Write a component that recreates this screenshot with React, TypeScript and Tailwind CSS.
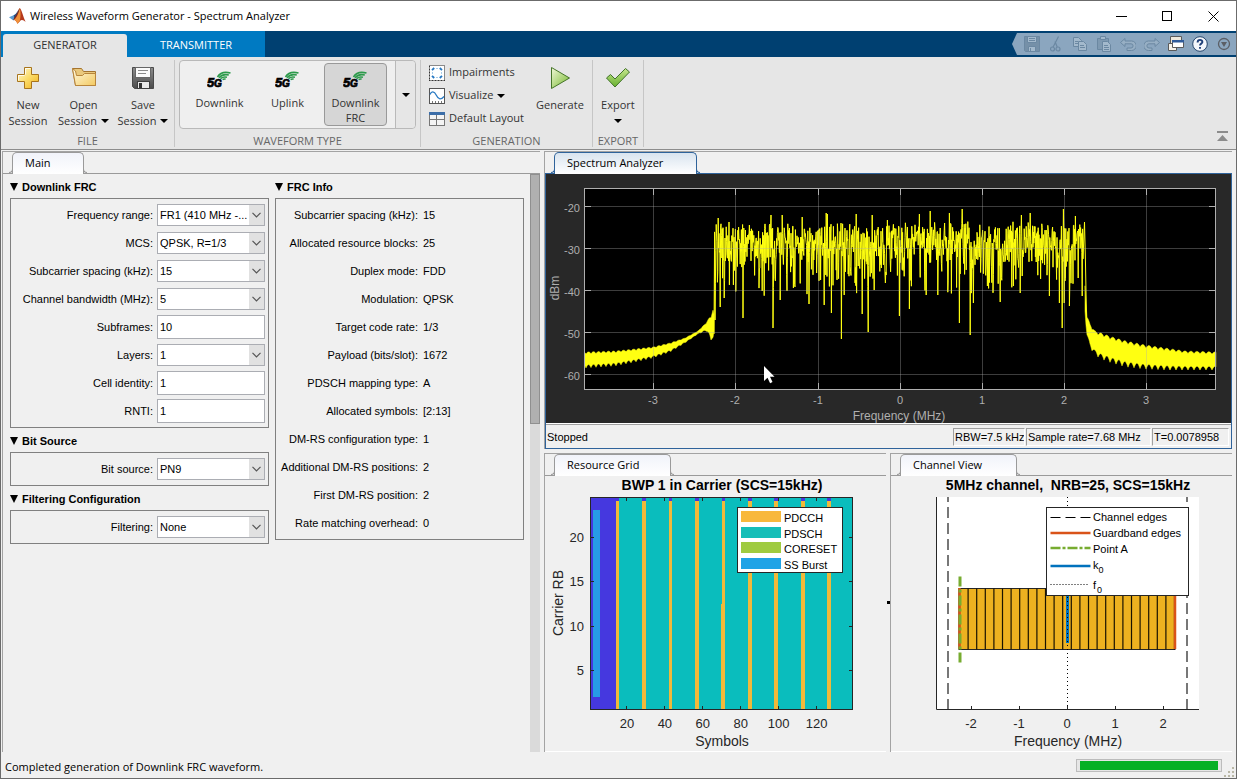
import React from "react";

const UI = "font-['Open_Sans','Noto_Sans',sans-serif]";
const ARIAL = "Liberation Sans, Arial, sans-serif";

/* ---------- icons ---------- */

function MatlabLogo() {
  return (
    <svg width="17" height="16" viewBox="0 0 17 16" aria-hidden="true">
      <path d="M0 9.3 4.6 7.2 7.4 9.2 4.4 12.4 Z" fill="#5b9bd0" />
      <path d="M4.6 7.2C6.6 6.6 7.6 4.6 9 2.4L7.4 9.4 6 11Z" fill="#1d4f86" />
      <path d="M10.8 0C9.2 1.6 8.3 5.4 6.2 8.2 5.6 9.2 4.6 10.8 4.4 12.2 6.2 11.6 7.6 13.6 8.4 15.8 10 14.8 11 12.4 12.6 12 14 11.7 15.2 12.8 16.6 13.8 14.4 9.6 13 2.4 10.8 0Z" fill="#b5391c" />
      <path d="M10.8 0C11.6 3 12 8 10.8 12.8 10 14 9.4 15.2 8.4 15.8 7.4 13.4 6.2 11.6 4.4 12.2 8 10.4 9.6 4.6 10.8 0Z" fill="#f0913a" />
      <path d="M10.8 0C9.4 1.4 8.6 5 6.4 8 5.6 9 4.8 10.6 4.4 12.2 6.8 10 9.2 6 10.8 0Z" fill="#4a2530" opacity="0.75" />
    </svg>
  );
}

function PlusIcon() {
  return (
    <svg width="24" height="24" viewBox="0 0 24 24" aria-hidden="true">
      <defs>
        <linearGradient id="plusFill" x1="0" y1="0" x2="1" y2="1">
          <stop offset="0" stopColor="#fffbe0" />
          <stop offset="0.5" stopColor="#fbdc6a" />
          <stop offset="1" stopColor="#efb01c" />
        </linearGradient>
      </defs>
      <path d="M8.5 1.5h7v7h7v7h-7v7h-7v-7h-7v-7h7z" fill="url(#plusFill)" stroke="#a8741c" />
      <path d="M9.5 8.5v-6h5M2.5 14.5v-5h6" fill="none" stroke="#fff" opacity="0.8" />
    </svg>
  );
}

function FolderIcon() {
  return (
    <svg width="26" height="22" viewBox="0 0 26 22" aria-hidden="true">
      <defs>
        <linearGradient id="folderFill" x1="0" y1="0" x2="1" y2="1">
          <stop offset="0" stopColor="#fffbe6" />
          <stop offset="1" stopColor="#f3c95f" />
        </linearGradient>
      </defs>
      <path d="M1.5 2.5H10.5L12.5 5.5H24.5V19.5H4.5Z" fill="#e9c87c" stroke="#a5742f" />
      <path d="M1.5 2.5 4.5 19.5H24.5V7.5H13.5L11.5 9.5H5.5L4.500 5Z" fill="url(#folderFill)" stroke="#b8853b" />
    </svg>
  );
}

function SaveIcon() {
  return (
    <svg width="24" height="24" viewBox="0 0 24 24" aria-hidden="true">
      <defs>
        <linearGradient id="saveFill" x1="0" y1="0" x2="0" y2="1">
          <stop offset="0" stopColor="#8d8d8d" />
          <stop offset="1" stopColor="#4b4b4b" />
        </linearGradient>
      </defs>
      <path d="M1.5 1.5h21v21h-19l-2-2z" fill="url(#saveFill)" stroke="#4a4a4a" />
      <rect x="4.5" y="1.5" width="15" height="10" fill="#fafafa" stroke="#666" />
      <path d="M7 4.5h10M7 7.5h8" stroke="#8a8a8a" />
      <rect x="6.5" y="15.5" width="12" height="7" fill="#e8e8e8" stroke="#3d3d3d" />
      <rect x="8" y="17" width="3" height="5" fill="#333" />
    </svg>
  );
}

function FiveGIcon() {
  return (
    <svg width="26" height="20" viewBox="0 0 26 20" aria-hidden="true">
      <text x="0" y="17" fontFamily={ARIAL} fontSize="13" fontWeight="bold" fontStyle="italic" fill="#000" stroke="#000" strokeWidth="0.7">5</text>
      <text x="7" y="17" fontFamily={ARIAL} fontSize="10" fontWeight="bold" fontStyle="italic" fill="#000" stroke="#000" strokeWidth="0.7">G</text>
      <g fill="none" stroke="#2c9a4b" strokeWidth="1.6">
        <path d="M10.5 7C13 2.8 18 1.6 23.5 3" />
        <path d="M12 7.8C14.5 4.8 17.6 4 21.8 5" />
        <path d="M13.5 8.6C15.6 6.8 17.4 6.6 20 7.2" />
        <path d="M15.6 9.6C16.6 8.9 17.6 8.8 18.6 9.3" />
      </g>
    </svg>
  );
}

function ImpairmentsIcon() {
  return (
    <svg width="16" height="16" viewBox="0 0 16 16" aria-hidden="true">
      <rect x="0.5" y="0.5" width="15" height="15" fill="#fff" stroke="#8a8a8a" />
      <path d="M0.5 1v15M0 15.5h16" stroke="#333" strokeDasharray="1 2" />
      <g stroke="#2678c2" strokeWidth="1.8">
        <path d="M3 5.2 5.2 3M10.8 3 13 5.2M3 10.8 5.2 13M10.8 13 13 10.8" />
      </g>
      <path d="M7 3.5h2M7 12.5h2M3.5 7v2M12.5 7v2" stroke="#a9cdea" />
    </svg>
  );
}

function VisualizeIcon() {
  return (
    <svg width="16" height="16" viewBox="0 0 16 16" aria-hidden="true">
      <rect x="0.5" y="0.5" width="15" height="15" fill="#fff" stroke="#555" />
      <path d="M3.5 15v-2M6.5 15v-2M9.5 15v-2M12.5 15v-2" stroke="#777" />
      <path d="M1 6.5C2.5 3 5 2.8 7.5 7.5 9.5 11.8 12 12 15 8.5" fill="none" stroke="#2678c2" strokeWidth="1.3" />
    </svg>
  );
}

function LayoutIcon() {
  return (
    <svg width="16" height="16" viewBox="0 0 16 16" aria-hidden="true">
      <rect x="0.5" y="1.5" width="15" height="13" fill="#f4f4f4" stroke="#777" />
      <rect x="0" y="1" width="16" height="3" fill="#3c6ea8" />
      <path d="M7.5 4v10M1 8.5h14" stroke="#777" />
    </svg>
  );
}

function PlayIcon() {
  return (
    <svg width="22" height="24" viewBox="0 0 22 24" aria-hidden="true">
      <defs>
        <linearGradient id="playFill" x1="0" y1="0" x2="1" y2="1">
          <stop offset="0" stopColor="#f1f8d8" />
          <stop offset="1" stopColor="#74b72b" />
        </linearGradient>
      </defs>
      <path d="M2.5 1.5 20.5 12 2.5 22.5Z" fill="url(#playFill)" stroke="#46752a" strokeLinejoin="round" />
    </svg>
  );
}

function CheckIcon() {
  return (
    <svg width="26" height="22" viewBox="0 0 26 22" aria-hidden="true">
      <defs>
        <linearGradient id="checkFill" x1="0" y1="0" x2="0" y2="1">
          <stop offset="0" stopColor="#c6e68d" />
          <stop offset="1" stopColor="#67b02f" />
        </linearGradient>
      </defs>
      <path d="M1.5 12 5.5 8.5 10 13 20.5 2.5 24.5 6 10 21Z" fill="url(#checkFill)" stroke="#41722a" strokeLinejoin="round" />
    </svg>
  );
}

function Caret() {
  return (
    <svg width="8" height="4" viewBox="0 0 8 4" aria-hidden="true" className="inline-block shrink-0">
      <path d="M0 0h8L4 4z" fill="#000" />
    </svg>
  );
}

/* ---------- title bar and ribbon ---------- */

function TitleBar() {
  return (
    <header className="flex h-[30px] shrink-0 items-center bg-white pl-2">
      <MatlabLogo />
      <h1 className="flex-1 pl-1 text-[11px] text-black">Wireless Waveform Generator - Spectrum Analyzer</h1>
      <button aria-label="Minimize" className="flex w-[46px] justify-center">
        <svg width="11" height="11"><path d="M0 5.5h11" stroke="#000" /></svg>
      </button>
      <button aria-label="Maximize" className="flex w-[46px] justify-center">
        <svg width="11" height="11"><rect x="0.5" y="0.5" width="9" height="9" fill="none" stroke="#000" /></svg>
      </button>
      <button aria-label="Close" className="flex w-[46px] justify-center">
        <svg width="11" height="11"><path d="M0.5 0.5l10 10M10.5 0.5l-10 10" stroke="#000" /></svg>
      </button>
    </header>
  );
}

const quick: { name: string; art: React.ReactNode }[] = [
  {
    name: "Save",
    art: (
      <g fill="none" stroke="#6b88a2">
        <path d="M0.5 0.5h15v15h-14l-1-1z" fill="#7590a8" />
        <path d="M3.5 0.5h9v6h-9z" fill="#a3b9cc" />
        <path d="M4.5 10.5h7v5h-7z" fill="#a3b9cc" />
        <path d="M5 2.5h6M5 4.5h6M6.5 12v3" />
      </g>
    ),
  },
  {
    name: "Cut",
    art: (
      <g fill="none" stroke="#6b88a2" strokeWidth="1.2">
        <circle cx="4.5" cy="13" r="2" />
        <circle cx="10" cy="13" r="2" />
        <path d="M5 11.2 10.5 0.5M9.2 11 7 5.5" />
      </g>
    ),
  },
  {
    name: "Copy",
    art: (
      <g fill="#a3b9cc" stroke="#6b88a2">
        <path d="M1.5 1.5h5l3 3v6h-8z" />
        <path d="M6.5 5.5h5l3 3v6h-8z" />
        <path d="M3 5.5h3M3 7.5h3M8 9.5h4M8 11.5h5" />
      </g>
    ),
  },
  {
    name: "Paste",
    art: (
      <g fill="#7e99b1" stroke="#6b88a2">
        <path d="M1.5 2.5h11v11h-11z" />
        <path d="M4.5 0.5h5v3h-5z" fill="#a3b9cc" />
        <path d="M6.5 5.5h5l3 3v7h-8z" fill="#a3b9cc" />
        <path d="M8 9.5h4M8 11.5h5M8 13.5h5" />
      </g>
    ),
  },
  { name: "Undo", art: <path d="M0.5 6.5 5 2.5V5h6.5a4 4 0 0 1 0 9.5H7v-2.5h4a1.8 1.8 0 0 0 0-4.2H5v2.7z" fill="#97afc4" stroke="#6b88a2" /> },
  { name: "Redo", art: <path d="M15.5 6.5 11 2.5V5H4.5a4 4 0 0 0 0 9.5H8v-2.5H5a1.8 1.8 0 0 1 0-4.2h6v2.7z" fill="#97afc4" stroke="#6b88a2" /> },
  {
    name: "Windows",
    art: (
      <g stroke="#5a5a5a">
        <path d="M2.5 0.5h11v9h-11z" fill="#efe9dc" />
        <path d="M0.5 7.5h8v7h-8z" fill="#f7f3ea" />
        <path d="M4.5 4.5h11v7h-11z" fill="#fff" />
        <path d="M4 4h12v2.5H4z" fill="#2f5b9a" stroke="none" />
      </g>
    ),
  },
  {
    name: "Help",
    art: (
      <g>
        <circle cx="8" cy="8" r="7.3" fill="#f4f7fb" stroke="#27476d" />
        <path d="M5.6 6.4C5.6 3 10.6 3.2 10.4 6.2 10.2 7.8 8 7.6 8 9.6M8 11v1.8" fill="none" stroke="#1f3f78" strokeWidth="1.9" />
      </g>
    ),
  },
  {
    name: "More",
    art: (
      <g>
        <circle cx="8" cy="8" r="5.5" fill="none" stroke="#5b5f66" strokeWidth="1.3" />
        <path d="M5 6h6L8 11z" fill="#5b5f66" />
      </g>
    ),
  },
];

function TabBand() {
  return (
    <div className="flex h-[26px] shrink-0 items-stretch bg-[#004071]">
      <nav className="flex bg-[#007ac2] pl-0.5 text-[11px]">
        <button className="mt-[3px] w-[124px] rounded-t-[3px] bg-[#e6e6e6] text-[#333]">GENERATOR</button>
        <button className="w-[138px] pt-[3px] text-white">TRANSMITTER</button>
      </nav>
      <div className="flex-1" />
      <div className="my-0.5 flex items-center gap-2 bg-[#8ba6bf] pr-1 pl-3 [clip-path:polygon(5px_0,100%_0,100%_100%,5px_100%,0_50%)]">
        {quick.map((q) => (
          <button key={q.name} aria-label={q.name}>
            <svg width="16" height="16" viewBox="0 0 16 16" className="block">{q.art}</svg>
          </button>
        ))}
      </div>
    </div>
  );
}

function Section({ title, children }: { title: string; children: React.ReactNode }) {
  return (
    <section className="mt-[3px] mb-0.5 flex flex-col border-r border-[#c6c6c6]">
      <div className="flex flex-1 items-start">{children}</div>
      <h2 className="text-center text-[11px] leading-[13px] text-[#666]">{title}</h2>
    </section>
  );
}

function BigButton({ icon, children, width }: { icon: React.ReactNode; children: React.ReactNode; width: string }) {
  return (
    <button className={`flex flex-col items-center pt-1.5 text-[11px] leading-4 text-[#333] ${width}`}>
      <span className="flex h-[31px] items-start justify-center">{icon}</span>
      {children}
    </button>
  );
}

function GalleryItem({ selected, children }: { selected?: boolean; children: React.ReactNode }) {
  const skin = selected ? "border-[#999] bg-[#d6d6d6]" : "border-transparent";
  return (
    <button className={`flex h-[63px] w-[63px] flex-col items-center rounded border pt-1.5 text-[11px] leading-[15px] text-[#333] ${skin}`}>
      <FiveGIcon />
      <span className="pt-[5px]">{children}</span>
    </button>
  );
}

function Ribbon() {
  return (
    <div className="flex h-[93px] shrink-0 border-b border-[#8c8c8c] bg-[#e6e6e6]">
      <Section title="FILE">
        <BigButton icon={<PlusIcon />} width="w-[54px]"><span>New</span><span>Session</span></BigButton>
        <BigButton icon={<FolderIcon />} width="w-[57px]"><span>Open</span><span className="flex items-center gap-1 whitespace-nowrap">Session <Caret /></span></BigButton>
        <BigButton icon={<SaveIcon />} width="w-[62px]"><span>Save</span><span className="flex items-center gap-1 whitespace-nowrap">Session <Caret /></span></BigButton>
      </Section>
      <Section title="WAVEFORM TYPE">
        <div className="mx-1 flex h-[69px] rounded border border-[#b9b9b9] bg-[#efefef]">
          <div className="flex gap-[5px] px-2 pt-0.5">
            <GalleryItem>Downlink</GalleryItem>
            <GalleryItem>Uplink</GalleryItem>
            <GalleryItem selected>Downlink<br />FRC</GalleryItem>
          </div>
          <button aria-label="More waveform types" className="flex w-5 items-center justify-center rounded-r border-l border-[#b9b9b9] bg-[#e6e6e6]"><Caret /></button>
        </div>
      </Section>
      <Section title="GENERATION">
        <div className="flex flex-col pt-px pl-2 text-[11px] text-[#333]">
          <button className="flex h-[23px] items-center gap-1"><ImpairmentsIcon />Impairments</button>
          <button className="flex h-[23px] items-center gap-1"><VisualizeIcon />Visualize <Caret /></button>
          <button className="flex h-[23px] items-center gap-1 whitespace-nowrap"><LayoutIcon />Default Layout</button>
        </div>
        <div className="pl-1">
          <BigButton icon={<PlayIcon />} width="w-[64px]"><span>Generate</span></BigButton>
        </div>
      </Section>
      <Section title="EXPORT">
        <BigButton icon={<CheckIcon />} width="w-[50px]"><span>Export</span><span className="flex h-4 items-center"><Caret /></span></BigButton>
      </Section>
      <button aria-label="Collapse toolstrip" className="mr-2 mb-[7px] ml-auto self-end">
        <svg width="11" height="11" viewBox="0 0 11 11" className="block"><path d="M0 0h11v2H0zM5.5 4 11 10H0z" fill="#8c8c8c" /></svg>
      </button>
    </div>
  );
}

/* ---------- docked panels ---------- */

function Panel({ title, tabWidth, active, children }: { title: string; tabWidth: string; active?: boolean; children: React.ReactNode }) {
  const line = active ? "border-[#2f639b]" : "border-[#9a9a9a]";
  const fill = active ? "from-[#d9e4ef]" : "from-[#f1f3fa]";
  return (
    <section className="flex min-h-0 min-w-0 flex-col border-t border-l border-[#a3a3a3]">
      <div className={`flex h-[22px] shrink-0 border-b pl-1.5 ${line}`}>
        <span className={`-mr-px h-1 w-1 self-end rounded-br border-r border-b ${line}`} />
        <h2 className={`z-10 -mb-px flex items-center rounded-t-[5px] border-x border-t bg-linear-to-b to-white px-3 text-[11px] text-black ${fill} ${line} ${tabWidth}`}>{title}</h2>
        <span className={`z-10 -ml-px h-1 w-1 self-end rounded-bl border-b border-l ${line}`} />
      </div>
      {children}
    </section>
  );
}

function Group({ title, children }: { title: string; children: React.ReactNode }) {
  return (
    <section>
      <h3 className="flex h-6 items-center gap-1 pt-0.5 text-[11px] font-bold text-black">
        <svg width="8" height="8" viewBox="0 0 8 8" aria-hidden="true"><path d="M0 0h8L4 8z" /></svg>
        {title}
      </h3>
      <div className="border border-[#808080] py-0.5">{children}</div>
    </section>
  );
}

function Row({ id, label, value, kind }: { id: string; label: string; value: string; kind: "select" | "text" }) {
  return (
    <div className="flex h-7 items-center pr-[3px]">
      <label htmlFor={id} className="flex-1 pr-1 text-right">{label}</label>
      {kind === "select" ? (
        <div className="relative w-[108px]">
          <select id={id} defaultValue={value} className="block h-[22px] w-full appearance-none rounded-none border border-[#abadb3] bg-white pr-4 pl-0.5 text-[11px] text-black">
            <option>{value}</option>
          </select>
          <span className="pointer-events-none absolute inset-y-px right-px flex w-[15px] items-center justify-center bg-[#e1e1e1]">
            <svg width="9" height="6" viewBox="0 0 9 6"><path d="M0.5 0.8 4.5 4.8 8.5 0.8" fill="none" stroke="#555" strokeWidth="1.2" /></svg>
          </span>
        </div>
      ) : (
        <input id={id} defaultValue={value} className="h-6 w-[108px] border border-[#abadb3] bg-white pl-0.5 text-[11px] text-black" />
      )}
    </div>
  );
}

const info: [string, string][] = [
  ["Subcarrier spacing (kHz):", "15"],
  ["Allocated resource blocks:", "25"],
  ["Duplex mode:", "FDD"],
  ["Modulation:", "QPSK"],
  ["Target code rate:", "1/3"],
  ["Payload (bits/slot):", "1672"],
  ["PDSCH mapping type:", "A"],
  ["Allocated symbols:", "[2:13]"],
  ["DM-RS configuration type:", "1"],
  ["Additional DM-RS positions:", "2"],
  ["First DM-RS position:", "2"],
  ["Rate matching overhead:", "0"],
];

function MainPanel() {
  return (
    <Panel title="Main" tabWidth="w-[72px]">
      <div className="flex min-h-0 flex-1 justify-between overflow-hidden pl-[7px] font-['Liberation_Sans',Arial,sans-serif] text-[11px] text-black">
        <div className="w-[259px]">
          <Group title="Downlink FRC">
            <Row id="range" kind="select" label="Frequency range:" value="FR1 (410 MHz -..." />
            <Row id="mcs" kind="select" label="MCS:" value="QPSK, R=1/3" />
            <Row id="scs" kind="select" label="Subcarrier spacing (kHz):" value="15" />
            <Row id="bw" kind="select" label="Channel bandwidth (MHz):" value="5" />
            <Row id="subframes" kind="text" label="Subframes:" value="10" />
            <Row id="layers" kind="select" label="Layers:" value="1" />
            <Row id="cell" kind="text" label="Cell identity:" value="1" />
            <Row id="rnti" kind="text" label="RNTI:" value="1" />
          </Group>
          <Group title="Bit Source">
            <Row id="bits" kind="select" label="Bit source:" value="PN9" />
          </Group>
          <Group title="Filtering Configuration">
            <Row id="filter" kind="select" label="Filtering:" value="None" />
          </Group>
        </div>
        <div className="w-[249px]">
          <Group title="FRC Info">
            <dl>
              {info.map(([k, v]) => (
                <div key={k} className="flex h-7 items-center gap-[5px]">
                  <dt className="w-[142px] text-right whitespace-nowrap">{k}</dt>
                  <dd>{v}</dd>
                </div>
              ))}
            </dl>
          </Group>
        </div>
        <div className="w-[10px] bg-[#dadada]">
          <div className="h-[250px] border border-[#8f8f8f] bg-[#b0b0b0]" />
        </div>
      </div>
    </Panel>
  );
}

/* ---------- spectrum ---------- */

const fx = (mhz: number) => Math.floor(354.2 + 82.2 * mhz);
const dy = (dbm: number) => Math.floor(32.5 - (dbm + 20) * 4.2);

const extremes: [number, number][] = [
  [169, 146], [172, 44], [174, 133], [178, 124], [183, 48], [197, 144], [216, 117], [225, 41], [227, 154], [234, 126], [236, 41], [256, 43], [263, 130],
  [278, 131], [280, 39], [281, 40], [285, 139], [295, 165], [298, 121], [310, 40], [316, 140], [322, 158], [326, 41], [328, 116], [341, 46], [353, 142],
  [363, 135], [373, 40], [380, 121], [384, 37], [403, 39], [413, 149], [416, 35], [424, 161], [427, 129], [441, 112], [454, 128], [467, 112], [474, 119],
  [475, 41], [484, 39], [503, 122], [513, 129], [516, 154], [517, 35], [518, 129], [523, 132], [529, 42],
];

// Faded carrier bins: exponentially distributed power, in dB, around the in-band mean.
function inBandTrace() {
  let seed = 90211;
  const rnd = () => {
    seed = (seed * 1664525 + 1013904223) % 4294967296;
    return (seed + 1) / 4294967297;
  };
  const pts: string[] = ["168,160"];
  let next = 0;
  for (let x = 168.6; x <= 537; x += 0.4) {
    if (next < extremes.length && extremes[next][0] <= x) {
      pts.push(`${x.toFixed(1)},${extremes[next][1]}`);
      next++;
      continue;
    }
    const db = 10 * Math.log10(-Math.log(rnd()));
    const y = Math.min(108 + rnd() * 14, Math.max(47 + rnd() * 8, 65 - db * 3.4));
    pts.push(`${x.toFixed(1)},${y.toFixed(1)}`);
  }
  pts.push("538.5,48", "539.5,90", "540.5,145");
  return pts.join(" ");
}

type Env = [number, number, number];

function skirt(env: Env[], period: number) {
  const at = (x: number): [number, number] => {
    let i = 0;
    while (i < env.length - 2 && env[i + 1][0] < x) i++;
    const [x0, t0, b0] = env[i];
    const [x1, t1, b1] = env[i + 1];
    const k = (x - x0) / (x1 - x0);
    return [t0 + (t1 - t0) * k, b0 + (b1 - b0) * k];
  };
  const top: string[] = [];
  const bottom: string[] = [];
  for (let x = env[0][0]; x <= env[env.length - 1][0]; x += 0.5) {
    const [t, b] = at(x);
    const wob = Math.abs(Math.sin((Math.PI * x) / period));
    const depth = (b - t) * 0.2;
    top.push(`${x},${(t + depth * 0.6 * (1 - wob)).toFixed(1)}`);
    bottom.unshift(`${x},${(b - depth * wob).toFixed(1)}`);
  }
  return [...top, ...bottom].join(" ");
}

const leftSkirt: Env[] = [[39, 178, 194], [69, 177, 192], [89, 175, 188], [107, 173, 184], [124, 169, 178], [139, 164, 169], [152, 157, 160], [160, 149, 157], [165, 141, 166], [167, 136, 170], [168, 140, 162]];
const rightSkirt: Env[] = [[539, 110, 140], [541, 142, 163], [544, 150, 174], [549, 157, 181], [555, 159, 185], [566, 163, 189], [580, 167, 193], [599, 171, 195], [619, 174, 196], [639, 177, 196], [670, 178, 196]];

function SpectrumPlot() {
  return (
    <svg viewBox="0 0 685 249" className="block min-h-0 w-full flex-1 bg-[#282828]" role="img" aria-label="Spectrum">
      <rect x="38.5" y="14.5" width="631" height="201" fill="#000" />
      <polyline points={inBandTrace()} fill="none" stroke="#ffff11" strokeWidth="1" strokeLinejoin="bevel" />
      <polygon points={skirt(leftSkirt, 5)} fill="#ffff11" stroke="#ffff11" strokeWidth="0.5" />
      <polygon points={skirt(rightSkirt, 6)} fill="#ffff11" stroke="#ffff11" strokeWidth="0.5" />
      <g fontFamily={ARIAL} fontSize="11" fill="#afafaf">
        {[-3, -2, -1, 0, 1, 2, 3].map((f) => (
          <g key={f}>
            <path d={`M${fx(f) + 0.5} 15V215`} stroke="#afafaf" opacity="0.35" />
            <path d={`M${fx(f) + 0.5} 15v6M${fx(f) + 0.5} 215v-6`} stroke="#afafaf" />
            <text x={fx(f)} y="230" textAnchor="middle">{f}</text>
          </g>
        ))}
        {[-20, -30, -40, -50, -60].map((d) => (
          <g key={d}>
            <path d={`M39 ${dy(d) + 0.5}H669`} stroke="#afafaf" opacity="0.35" />
            <path d={`M39 ${dy(d) + 0.5}h6M669 ${dy(d) + 0.5}h-6`} stroke="#afafaf" />
            <text x="34" y={dy(d) + 6} textAnchor="end">{d}</text>
          </g>
        ))}
        <text x="353" y="246" textAnchor="middle" fontSize="12">Frequency (MHz)</text>
        <text transform="translate(13 114) rotate(-90)" textAnchor="middle" fontSize="12">dBm</text>
      </g>
      <rect x="38.5" y="14.5" width="631" height="201" fill="none" stroke="#afafaf" />
      <path d="M218 192v15l3.5-3.2 2.6 5.4 2.4-1.2-2.5-5.2h4.5z" fill="#fff" />
    </svg>
  );
}

function StatusCell({ width, children }: { width: string; children: React.ReactNode }) {
  return <span className={`flex h-[18px] items-center overflow-hidden border border-t-[#a0a0a0] border-r-white border-b-white border-l-[#a0a0a0] pl-px whitespace-nowrap ${width}`}>{children}</span>;
}

function SpectrumPanel() {
  return (
    <Panel title="Spectrum Analyzer" tabWidth="w-[143px]" active>
      <div className="flex min-h-0 flex-1 flex-col border-x border-b border-[#2f639b]">
        <SpectrumPlot />
        <div className="flex h-[25px] shrink-0 items-center gap-px border-t border-white pt-0.5 pr-0.5 pl-px font-['Liberation_Sans',Arial,sans-serif] text-[11px] text-black shadow-[inset_0_1px_0_#a0a0a0]">
          <span className="flex-1">Stopped</span>
          <StatusCell width="w-[72px]">RBW=7.5 kHz</StatusCell>
          <StatusCell width="w-[125px]">Sample rate=7.68 MHz</StatusCell>
          <StatusCell width="w-[77px]">T=0.0078958</StatusCell>
        </div>
      </div>
    </Panel>
  );
}

/* ---------- resource grid ---------- */

const gridLegend: [string, string][] = [
  ["PDCCH", "#f8b83c"],
  ["PDSCH", "#16beb8"],
  ["CORESET", "#9fcb40"],
  ["SS Burst", "#1fa3e6"],
];

const pdcch: [number, number][] = [[70, 3], [96, 4], [123, 3], [149, 4], [176, 3], [202, 4], [228, 4], [255, 4], [281, 4]];

function ResourceGridPlot() {
  return (
    <svg viewBox="0 0 341 275" className="block min-h-0 w-full flex-1 border-b border-white" role="img" aria-label="Resource grid" fontFamily={ARIAL} fill="#262626">
      <text x="177" y="14" textAnchor="middle" fontSize="14" fontWeight="bold" fill="#000">BWP 1 in Carrier (SCS=15kHz)</text>
      <g shapeRendering="crispEdges" transform="translate(1 0)">
        <rect x="44" y="21" width="263" height="213" fill="#0abdbd" />
        <rect x="44" y="21" width="26" height="213" fill="#4538df" />
        <rect x="47" y="34" width="7" height="187" fill="#279be6" />
        {pdcch.map(([x, w]) => (
          <g key={x}>
            <rect x={x} y="21" width={w} height="4" fill="#4538df" />
            <rect x={x} y="25" width={w} height="209" fill="#f0b93a" />
          </g>
        ))}
        <rect x="175" y="128" width="1" height="106" fill="#f0b93a" />
        <rect x="44.5" y="21.5" width="262" height="212" fill="none" stroke="#262626" />
      </g>
      {[5, 10, 15, 20].map((v) => (
        <g key={v}>
          <path d={`M46 ${Math.round(238.5 - v * 8.9)}.5h3M307 ${Math.round(238.5 - v * 8.9)}.5h-3`} stroke="#262626" />
          <text x="39" y={243.5 - v * 8.9} textAnchor="end" fontSize="13">{v}</text>
        </g>
      ))}
      {[20, 40, 60, 80, 100, 120].map((v) => (
        <g key={v}>
          <path d={`M${Math.round(43.5 + v * 1.897)}.5 233v-3M${Math.round(43.5 + v * 1.897)}.5 22v3`} stroke="#262626" />
          <text x={44 + v * 1.897} y="252" textAnchor="middle" fontSize="13">{v}</text>
        </g>
      ))}
      <text x="177" y="270" textAnchor="middle" fontSize="14">Symbols</text>
      <text transform="translate(18 127) rotate(-90)" textAnchor="middle" fontSize="14">Carrier RB</text>
      <rect x="192.5" y="31.5" width="105" height="65" fill="#fff" stroke="#262626" />
      {gridLegend.map(([name, color], i) => (
        <g key={name}>
          <rect x="196" y={Math.round(35 + i * 15.7)} width="40" height="11" fill={color} />
          <text x="239" y={46 + i * 15.5} fontSize="11" fill="#000">{name}</text>
        </g>
      ))}
    </svg>
  );
}

/* ---------- channel view ---------- */

function ChannelPlot() {
  const blocks = Array.from({ length: 26 }, (_, i) => 68.5 + i * 8.6);
  return (
    <svg viewBox="0 0 341 275" className="block min-h-0 w-full flex-1 border-b border-white" role="img" aria-label="Channel view" fontFamily={ARIAL} fill="#262626">
      <text x="177" y="14" textAnchor="middle" fontSize="14" fontWeight="bold" fill="#000">{"5MHz channel,\u00a0 NRB=25, SCS=15kHz"}</text>
      <rect x="45" y="21" width="263" height="213" fill="#fff" />
      <g stroke="#777" strokeWidth="2" strokeDasharray="11 5">
        <path d="M57 234V21M296 234V21" />
      </g>
      <rect x="68" y="112.5" width="216" height="61" fill="#edb120" stroke="#262626" />
      <path d={blocks.map((x) => `M${x.toFixed(1)} 112.5v61`).join("")} stroke="#1a1300" strokeWidth="1.2" />
      <path d="M68.5 112v61M284 112v61" stroke="#d95319" strokeWidth="2.5" />
      <path d="M69 186.5V98" stroke="#77ac30" strokeWidth="3" strokeDasharray="10 3 3 3" />
      <path d="M176.5 167V112" stroke="#0072bd" strokeWidth="3" />
      <path d="M176.5 234V21" stroke="#000" strokeDasharray="1 3" />
      <path d="M45.5 21V233.5H308" fill="none" stroke="#262626" />
      {[-2, -1, 0, 1, 2].map((v) => (
        <g key={v}>
          <path d={`M${176.5 + v * 48} 233v-3`} stroke="#262626" />
          <text x={176 + v * 48} y="252" textAnchor="middle" fontSize="13">{v}</text>
        </g>
      ))}
      <text x="177" y="270" textAnchor="middle" fontSize="14">Frequency (MHz)</text>
      <rect x="155.5" y="31.5" width="142" height="88" fill="#fff" stroke="#262626" />
      <g fill="none">
        <path d="M159.5 41.5h40" stroke="#000" strokeDasharray="10 5" />
        <path d="M159.5 57h40" stroke="#d95319" strokeWidth="2.5" />
        <path d="M159.5 72h40" stroke="#77ac30" strokeWidth="2.5" strokeDasharray="10 2 3 2" />
        <path d="M159.5 90h40" stroke="#0072bd" strokeWidth="2.5" />
        <path d="M159.5 108.5h38" stroke="#000" strokeDasharray="1 2" />
      </g>
      <g fontSize="11" fill="#000">
        <text x="202" y="45">Channel edges</text>
        <text x="202" y="61">Guardband edges</text>
        <text x="202" y="77">Point A</text>
        <text x="202" y="93">k<tspan fontSize="9" dy="4">0</tspan></text>
        <text x="202" y="113">f<tspan fontSize="9" dx="1" dy="4">0</tspan></text>
      </g>
    </svg>
  );
}

function StatusBar() {
  return (
    <footer className="flex h-[26px] shrink-0 items-center bg-[#f0f0f0] pl-1 text-black">
      <p className="flex-1 pt-1 text-[11px]">Completed generation of Downlink FRC waveform.</p>
      <div role="progressbar" aria-label="Progress" aria-valuenow={100} className="h-[13px] w-[146px] border border-[#bcbcbc] bg-[#e6e6e6] px-[3px] py-px">
        <div className="h-full bg-[#06b025]" />
      </div>
      <svg width="11" height="11" viewBox="0 0 11 11" className="mr-px ml-0.5 self-end" fill="#b9b7a6" aria-hidden="true">
        <path d="M8 0h2v2H8zM4 4h2v2H4zM8 4h2v2H8zM0 8h2v2H0zM4 8h2v2H4zM8 8h2v2H8z" />
      </svg>
    </footer>
  );
}

export default function App() {
  return (
    <div className={`flex h-screen flex-col border border-[#6b6b6b] bg-[#f0f0f0] ${UI}`}>
      <TitleBar />
      <TabBand />
      <Ribbon />
      <main className="grid min-h-0 flex-1 grid-cols-[538px_minmax(0,1fr)] gap-1 pt-px pr-1 pl-px">
        <MainPanel />
        <div className="grid min-h-0 grid-rows-[minmax(0,298fr)_minmax(0,299fr)] gap-1">
          <SpectrumPanel />
          <div className="grid min-h-0 grid-cols-[minmax(0,1fr)_2px_minmax(0,1fr)] gap-px">
            <Panel title="Resource Grid" tabWidth="w-[117px]"><ResourceGridPlot /></Panel>
            <div className="h-[3px] w-[3px] self-center bg-black" />
            <Panel title="Channel View" tabWidth="w-[117px]"><ChannelPlot /></Panel>
          </div>
        </div>
      </main>
      <StatusBar />
    </div>
  );
}
